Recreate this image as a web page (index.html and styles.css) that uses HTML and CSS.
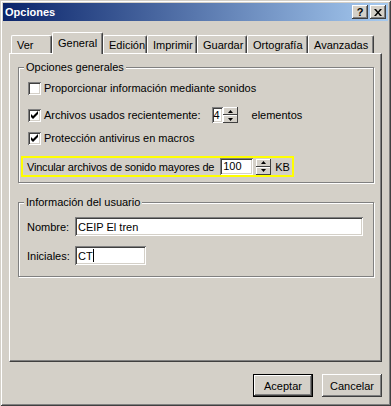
FILE: index.html
```html
<!DOCTYPE html>
<html lang="es">
<head>
    <meta charset="UTF-8">
    <title>Opciones</title>
    <link rel="stylesheet" href="styles.css">
</head>
<body>
    <div class="window">
        <div class="titlebar">
            <span class="title">Opciones</span>
            <div class="caption-btns">
                <div class="cap">?</div>
                <div class="cap">
                    <svg width="8" height="7" viewBox="0 0 8 7"><path d="M0 0h2l2 2.5L6 0h2L5 3.5 8 7H6L4 4.5 2 7H0l3-3.5z" fill="#000"/></svg>
                </div>
            </div>
        </div>

        <div class="body">
            <div class="tabs">
                <div class="tab tab-ver">Ver</div>
                <div class="tab tab-general active">General</div>
                <div class="tab tab-edicion">Edición</div>
                <div class="tab tab-imprimir">Imprimir</div>
                <div class="tab tab-guardar">Guardar</div>
                <div class="tab tab-ortografia">Ortografía</div>
                <div class="tab tab-avanzadas">Avanzadas</div>
            </div>

            <div class="panel">
                <!-- Opciones generales -->
                <fieldset class="group group-general">
                    <legend>Opciones generales</legend>
                    <div class="check-row first">
                        <span class="checkbox"></span>
                        <span>Proporcionar información mediante sonidos</span>
                    </div>
                    <div class="check-row spin-row">
                        <span class="checkbox checked">
                            <svg width="9" height="9" viewBox="0 0 9 9"><path d="M1 3v3l2 2 5-5V0L3 5z" fill="#000"/></svg>
                        </span>
                        <span>Archivos usados recientemente:</span>
                        <div class="spinner small">
                            <span class="spin-field sunken">4</span>
                            <div class="spin-btns">
                                <span class="spin-btn"><svg width="5" height="3" viewBox="0 0 5 3"><path d="M2.5 0L5 3H0z" fill="#000"/></svg></span>
                                <span class="spin-btn"><svg width="5" height="3" viewBox="0 0 5 3"><path d="M0 0h5L2.5 3z" fill="#000"/></svg></span>
                            </div>
                        </div>
                        <span class="unit">elementos</span>
                    </div>
                    <div class="check-row third">
                        <span class="checkbox checked">
                            <svg width="9" height="9" viewBox="0 0 9 9"><path d="M1 3v3l2 2 5-5V0L3 5z" fill="#000"/></svg>
                        </span>
                        <span>Protección antivirus en macros</span>
                    </div>
                    <div class="highlight">
                        <span class="link-label">Vincular archivos de sonido mayores de</span>
                        <span class="size-field sunken">100</span>
                        <div class="spin-btns loose">
                            <span class="spin-btn"><svg width="5" height="3" viewBox="0 0 5 3"><path d="M2.5 0L5 3H0z" fill="#000"/></svg></span>
                            <span class="spin-btn"><svg width="5" height="3" viewBox="0 0 5 3"><path d="M0 0h5L2.5 3z" fill="#000"/></svg></span>
                        </div>
                        <span class="kb">KB</span>
                    </div>
                </fieldset>

                <!-- Información del usuario -->
                <fieldset class="group group-user">
                    <legend>Información del usuario</legend>
                    <div class="field-row first">
                        <span class="field-label">Nombre:</span>
                        <span class="text-box sunken name-box">CEIP El tren</span>
                    </div>
                    <div class="field-row second">
                        <span class="field-label">Iniciales:</span>
                        <span class="text-box sunken initials-box">CT<span class="caret"></span></span>
                    </div>
                </fieldset>
            </div>

            <div class="actions">
                <div class="btn btn-default">Aceptar</div>
                <div class="btn">Cancelar</div>
            </div>
        </div>
    </div>
</body>
</html>
```

FILE: styles.css
```css
/* Classic dialog look */
body {
    margin: 0;
    font-family: "Liberation Sans", Arial, sans-serif;
    font-size: 11px;
    color: #000;
    white-space: nowrap;
    background-color: #D4D0C8;
}

.window {
    width: 391px;
    height: 406px;
    box-sizing: border-box;
    padding: 3px;
    background-color: #D4D0C8;
    box-shadow: inset 1px 1px #D4D0C8, inset -1px -1px #404040,
                inset 2px 2px #fff, inset -2px -2px #808080;
    display: flex;
    flex-direction: column;
}

/* Title bar */
.titlebar {
    height: 18px;
    display: flex;
    align-items: center;
    justify-content: space-between;
    padding: 0 2px;
    background: linear-gradient(to right, #0A246A, #A6CAF0);
}

.title {
    color: white;
    font-weight: bold;
    font-size: 11px;
}

.caption-btns {
    display: flex;
    gap: 2px;
}

.cap {
    width: 16px;
    height: 14px;
    box-sizing: border-box;
    background-color: #D4D0C8;
    box-shadow: inset -1px -1px #404040, inset 1px 1px #fff, inset -2px -2px #808080;
    display: flex;
    align-items: center;
    justify-content: center;
    font-weight: bold;
    font-size: 11px;
}

.body {
    flex: 1;
    padding: 11px 6px 0;
    display: flex;
    flex-direction: column;
}

/* Tabs */
.tabs {
    display: flex;
    align-items: flex-end;
    height: 21px;
    padding-left: 2px;
    position: relative;
    z-index: 1;
}

.tab {
    height: 18px;
    box-sizing: border-box;
    border: 1px solid #fff;
    border-right-color: #404040;
    border-bottom: none;
    border-radius: 2px 2px 0 0;
    box-shadow: inset -1px 0 #808080;
    background-color: #D4D0C8;
    display: flex;
    align-items: center;
    padding-left: 5px;
}

.tab.active {
    height: 22px;
    margin-bottom: -1px;
    padding-bottom: 2px;
}

.tab-ver { width: 41px; }
.tab-general { width: 51px; }
.tab-edicion { width: 44px; }
.tab-imprimir { width: 50px; }
.tab-guardar { width: 50px; }
.tab-ortografia { width: 61px; }
.tab-avanzadas { width: 66px; }

.panel {
    height: 309px;
    box-sizing: border-box;
    border: 1px solid #fff;
    border-right-color: #404040;
    border-bottom-color: #404040;
    box-shadow: inset -1px -1px #808080;
    padding: 0 7px 0 8px;
}

/* Group boxes */
.group {
    margin: 7px 0 0;
    padding: 0 0 5px;
    border: 1px solid #808080;
    box-shadow: 1px 1px #fff, inset 1px 1px #fff;
    min-width: 0;
}

.group legend {
    padding: 0 2px;
    margin-left: 5px;
    line-height: 13px;
    background-color: #D4D0C8;
}

.group-user {
    margin-top: 13px;
    padding-bottom: 11px;
}

.check-row {
    display: flex;
    align-items: center;
    height: 16px;
    padding-left: 9px;
    gap: 3px;
}

.check-row.first { margin-top: 6px; }
.check-row.spin-row { height: 20px; margin-top: 9px; }
.check-row.third { margin-top: 5px; }

.checkbox {
    width: 13px;
    height: 13px;
    box-sizing: border-box;
    background-color: #fff;
    box-shadow: inset 1px 1px #808080, inset -1px -1px #fff,
                inset 2px 2px #404040, inset -2px -2px #D4D0C8;
    display: flex;
    align-items: center;
    justify-content: center;
}

.sunken {
    background-color: #fff;
    box-shadow: inset 1px 1px #808080, inset -1px -1px #fff,
                inset 2px 2px #404040, inset -2px -2px #D4D0C8;
}

/* Spinners */
.spinner {
    display: flex;
    margin-left: 8px;
}

.spin-field {
    width: 11px;
    height: 16px;
    box-sizing: border-box;
    padding: 1px 0 0 2px;
    line-height: 14px;
}

.spin-btns {
    display: flex;
    flex-direction: column;
    flex-shrink: 0;
    width: 15px;
    height: 16px;
}

.spin-btn {
    flex: 1;
    background-color: #D4D0C8;
    box-shadow: inset -1px -1px #404040, inset 1px 1px #fff;
    display: flex;
    align-items: center;
    justify-content: center;
}

.unit {
    margin-left: 11px;
}

.highlight {
    margin: 10px 0 0 2px;
    width: 273px;
    height: 21px;
    box-sizing: border-box;
    border: 2px solid #FFFF00;
    display: flex;
    align-items: center;
    padding-left: 4px;
}

.link-label {
    flex-shrink: 0;
    letter-spacing: -0.2px;
}

.size-field {
    flex-shrink: 0;
    width: 33px;
    height: 17px;
    box-sizing: border-box;
    margin-left: 6px;
    padding: 2px 0 0 3px;
    line-height: 13px;
}

.spin-btns.loose {
    margin-left: 3px;
}

.kb {
    margin-left: 4px;
}

/* User info */
.field-row {
    display: flex;
    align-items: center;
    padding-left: 8px;
}

.field-row.first { margin-top: 8px; }
.field-row.second { margin-top: 10px; }

.field-label {
    width: 48px;
}

.text-box {
    height: 19px;
    box-sizing: border-box;
    padding: 0 3px;
    display: flex;
    align-items: center;
}

.name-box { width: 288px; }
.initials-box { width: 71px; }

.caret {
    width: 1px;
    height: 13px;
    background-color: #000;
}

/* Bottom buttons */
.actions {
    display: flex;
    justify-content: flex-end;
    gap: 9px;
    margin-top: 12px;
}

.btn {
    width: 60px;
    height: 23px;
    box-sizing: border-box;
    background-color: #D4D0C8;
    box-shadow: inset -1px -1px #404040, inset 1px 1px #fff, inset -2px -2px #808080;
    display: flex;
    align-items: center;
    justify-content: center;
}

.btn-default {
    border: 1px solid #000;
}
```
